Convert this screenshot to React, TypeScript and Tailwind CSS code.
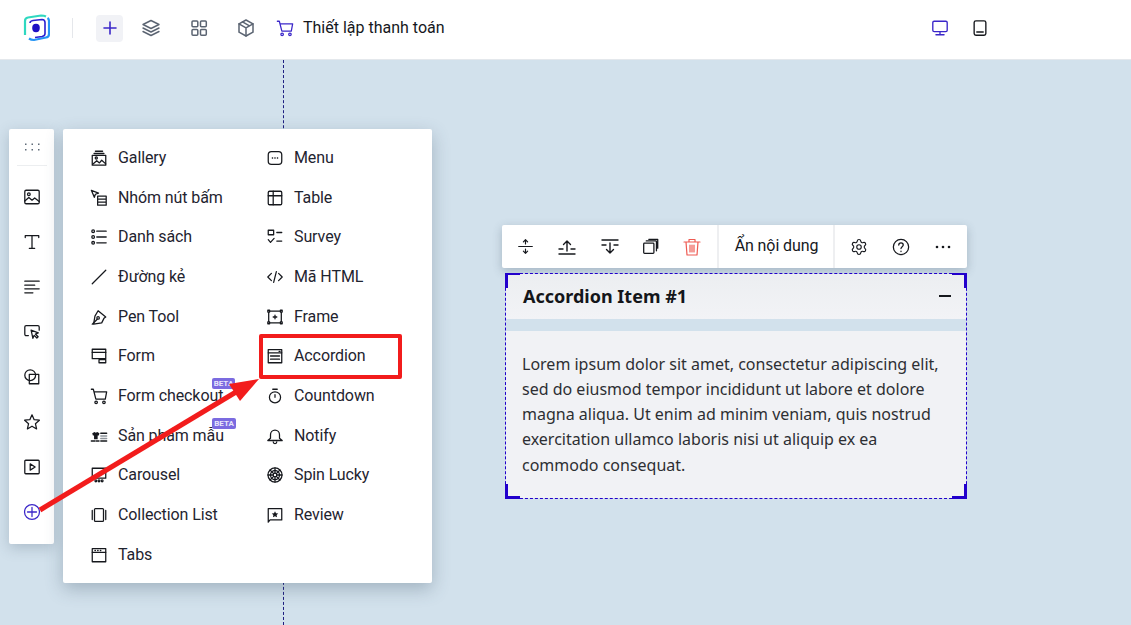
import React from "react";
import { Settings } from "lucide-react";

type P = { d: React.ReactNode; s?: number; c?: string; w?: number; v?: number };
const I = ({ d, s = 20, c = "#16181d", w = 1.4, v = 20 }: P) => (
  <svg width={s} height={s} viewBox={`0 0 ${v} ${v}`} fill="none" stroke={c} strokeWidth={w} strokeLinecap="round" strokeLinejoin="round" className="shrink-0">
    {d}
  </svg>
);

const icons: Record<string, React.ReactNode> = {
  gallery: <><path d="M6 2.5h8M4.5 5h11" /><rect x="2.5" y="7" width="15" height="11" /><circle cx="7" cy="10" r="1.2" /><path d="M3 17l4.5-4 3 2.5 2.5-3 4.5 4" /></>,
  group: <><path d="M1.5 1.5l8 3-3.5 1.3-1.2 3.5z" /><path d="M8.5 8H18v10H8.5zM8.5 11.3H18M8.5 14.7H18" /></>,
  list: <><circle cx="3.5" cy="3.5" r="1.5" /><circle cx="3.5" cy="10" r="1.5" /><circle cx="3.5" cy="16.5" r="1.5" /><path d="M7.5 3.5H18M7.5 10H18M7.5 16.5H18" /></>,
  line: <path d="M2.5 17.5L17.5 2.5" />,
  pen: <><path d="M9 3l8.5 7-2 1.5-2.5 5-9 1.5 1.5-9z" /><path d="M2.5 18l5.5-5.5" /><circle cx="9" cy="11" r="1.4" /></>,
  form: <><rect x="2.5" y="2.5" width="15" height="10.5" /><path d="M2.5 6h15" /><rect x="10" y="14" width="7.5" height="3.5" /></>,
  cart: <><path d="M1.5 2.5h2.2l2.8 11H17L18.5 5.5h-14" /><circle cx="6.8" cy="17" r="1.4" /><circle cx="15.5" cy="17" r="1.4" /></>,
  product: <><path d="M2.5 7L5 5.500l1.500 1 1.500-1L10.500 7l-.7 2.500H8.500v4h-4v-4H3.200z" fill="#16181d" stroke="none" /><path d="M1.500 15.500h4M7 15.500h3M12 15.500h6.500M12 7h6.500" strokeWidth="1.600" /><path d="M12 10h6.500M12 12.700h6.500" stroke="#8f959c" strokeWidth="1.600" /></>,
  carousel: <><rect x="2.500" y="2.500" width="15" height="11" /><circle cx="6.500" cy="16.500" r="1" /><circle cx="10" cy="16.500" r="1" /><circle cx="13.500" cy="16.500" r="1" /></>,
  collection: <><rect x="5" y="3" width="10" height="14" rx="1" /><path d="M2.500 5v10M17.500 5v10" /></>,
  tabs: <><rect x="2.500" y="3" width="15" height="14.500" /><path d="M2.500 7h15" /><path d="M5.500 5H6M8.500 5H9M11.500 5H12" /></>,
  menu: <><rect x="2.500" y="3" width="15" height="14" rx="3.500" /><path d="M7 10h.4M9.800 10h.4M12.600 10h.4" /></>,
  table: <><rect x="2.500" y="2.500" width="15" height="15" rx="1.500" /><path d="M2.500 7.500h15M8 2.500v15" /></>,
  survey: <><rect x="2.500" y="2.500" width="6" height="5" /><path d="M12 5h5.500M12 14.500h5.500M2.500 13L5 16l4-4.500" /></>,
  html: <path d="M6 6l-4 4 4 4M14 6l4 4-4 4M11.500 4l-3 12" />,
  frame: <><rect x="3" y="3.500" width="14" height="13" /><rect x="2" y="2.500" width="2" height="2" fill="#fff" /><rect x="16" y="2.500" width="2" height="2" fill="#fff" /><rect x="2" y="15.500" width="2" height="2" fill="#fff" /><rect x="16" y="15.500" width="2" height="2" fill="#fff" /><path d="M10 8v4M8 10h4" /></>,
  accordion: <><rect x="2.500" y="3" width="15" height="14.500" /><path d="M2.500 6.500h15M5 10h10M5 13.500h10" /><path d="M14.500 4.800h1.200" /></>,
  countdown: <><circle cx="10" cy="11.500" r="6.200" /><path d="M7.500 2.500h5M10 8.500v3" /></>,
  notify: <><path d="M5 12.500v-4a5 5 0 0110 0v4l3 2.500H2z" /><path d="M8 16.500a2 2 0 004 0" /></>,
  spin: <><circle cx="10" cy="10" r="7.800" /><circle cx="10" cy="10" r="5" /><circle cx="10" cy="10" r="2" /><path d="M10 2.200V8M10 12v5.800M2.200 10H8M12 10h5.800M4.500 4.500l4 4M11.500 11.500l4 4M15.500 4.500l-4 4M8.500 11.500l-4 4" /></>,
  review: <><path d="M2.500 18V3h15v12.500h-13z" /><path d="M10 5.800l1.100 2.300 2.500.3-1.800 1.700.5 2.500-2.300-1.300-2.300 1.300.5-2.500-1.800-1.700 2.500-.3z" fill="#16181d" stroke="none" /></>,
  image: <><rect x="2" y="2.500" width="16" height="15" rx="1.500" /><circle cx="6.500" cy="7" r="1.500" /><path d="M2 14.500l4.500-4 3.500 3 3-2.500 5 4" /></>,
  text: <path d="M2.500 5V3h15v2M10 3v14M7 17h6" />,
  align: <path d="M2 3.500h16M2 8h11M2 12h16M2 16.500h9" />,
  cursor: <><path d="M6 14H3.500A1.500 1.500 0 012 12.500v-8A1.500 1.500 0 013.500 3h13A1.500 1.500 0 0118 4.500V8" /><path d="M9 8l8 3-3.200 1.300 3 3-1.400 1.400-3-3L11 17z" /></>,
  shape: <><circle cx="8" cy="8" r="6" /><rect x="7" y="7" width="10.500" height="10.500" /></>,
  star: <path d="M10 2l2.400 5.400 5.800.6-4.400 3.900 1.300 5.800-5.100-3-5.100 3 1.300-5.800L1.800 8l5.800-.6z" />,
  video: <><rect x="2" y="2.500" width="16" height="15" rx="1" /><path d="M8 6.500l5.500 3.500L8 13.500z" /></>,
};

const col1: [string, string, boolean?][] = [
  ["gallery", "Gallery"],
  ["group", "Nhóm nút bấm"],
  ["list", "Danh sách"],
  ["line", "Đường kẻ"],
  ["pen", "Pen Tool"],
  ["form", "Form"],
  ["cart", "Form checkout", true],
  ["product", "Sản phẩm mẫu", true],
  ["carousel", "Carousel"],
  ["collection", "Collection List"],
  ["tabs", "Tabs"],
];
const col2: [string, string][] = [
  ["menu", "Menu"],
  ["table", "Table"],
  ["survey", "Survey"],
  ["html", "Mã HTML"],
  ["frame", "Frame"],
  ["accordion", "Accordion"],
  ["countdown", "Countdown"],
  ["notify", "Notify"],
  ["spin", "Spin Lucky"],
  ["review", "Review"],
];

const Row = ({ k, t, beta }: { k: string; t: string; beta?: boolean }) => (
  <div className="flex h-[39.7px] items-center gap-[10px]">
    <I d={icons[k]} s={18} />
    <span className="relative whitespace-nowrap text-[16px] leading-5 tracking-[-0.1px] text-[#1f2430]">
      {t}
      {beta && (
        <span className="absolute -top-[8px] right-[-12px] rounded-[2px] bg-[#7b6be0] px-[2px] text-[8px] font-bold leading-[11px] tracking-normal text-[#e8e6fb]">
          BETA
        </span>
      )}
    </span>
  </div>
);

const Corner = ({ cls }: { cls: string }) => <span className={`absolute h-[15px] w-[15px] border-[#2200cc] ${cls}`} />;

export default function App() {
  return (
    <div className="relative flex h-[625px] w-[1131px] flex-col overflow-hidden bg-[#d2e1ec] font-['Roboto',sans-serif]">
      {/* Guide line */}
      <div className="pointer-events-none absolute bottom-0 left-[283px] top-[60px] w-0 border-l border-dashed border-[#1e1e80]" />

      {/* Header */}
      <header className="relative flex h-[60px] shrink-0 items-center border-b border-[#e4e8ec] bg-white pb-[3px] pl-[23px]">
        <svg width="27" height="28" viewBox="0 0 27 28" fill="none" className="shrink-0">
          <path d="M2 21V7q0-3 3-3.500l13-2q3 0 5 1" stroke="#2fd8c0" strokeWidth="2.200" />
          <path d="M24.500 4q1.500 1 1.500 3v13q0 3-3 3.500l-12 2.500q-3 0-5-1.500" stroke="#2494f5" strokeWidth="2.200" />
          <path d="M7 9q0-2 3-2.500l9-1q3 0 3 3v11q0 2.500-3 3l-7 1" stroke="#2a1fd0" strokeWidth="1.600" />
          <ellipse cx="13" cy="14" rx="3.800" ry="4.200" fill="#1d0fc4" />
        </svg>
        <div className="ml-[22px] h-[20px] w-px bg-[#e5e7eb]" />
        <div className="ml-[23px] flex h-[27px] w-[27px] items-center justify-center rounded-[4px] bg-[#f1f2f6]">
          <I s={14} v={14} c="#3b27c9" w={1.6} d={<path d="M7 1v12M1 7h12" />} />
        </div>
        <div className="ml-[18px]">
          <I c="#5b6472" d={<><path d="M10 2.500l8 4-8 4-8-4z" /><path d="M2 10l8 4 8-4M2 13.500l8 4 8-4" /></>} />
        </div>
        <div className="ml-[28px]">
          <I c="#5b6472" w={1.5} d={<><rect x="3" y="3" width="5.800" height="5.800" rx="1" /><rect x="11.500" y="3" width="5.800" height="5.800" rx="1" /><rect x="3" y="11.500" width="5.800" height="5.800" rx="1" /><rect x="11.500" y="11.500" width="5.800" height="5.800" rx="1" /></>} />
        </div>
        <div className="ml-[27px]">
          <I c="#5b6472" w={1.5} d={<><path d="M10 2l7 3.800v8.400L10 18l-7-3.800V5.800z" /><path d="M3 5.800l7 4 7-4M10 9.800V18M6.500 3.900l7 4" /></>} />
        </div>
        <div className="ml-[20px]">
          <I s={18} c="#3b27c9" d={icons.cart} />
        </div>
        <span className="ml-[9px] text-[16px] leading-5 text-[#16181d]">Thiết lập thanh toán</span>
        <div className="ml-[486px]">
          <I s={18} c="#3b27c9" w={1.5} d={<><rect x="2" y="2.500" width="16" height="11.500" rx="1.500" /><path d="M10 14v3.500M5.500 17.500h9" /></>} />
        </div>
        <div className="ml-[22px]">
          <I s={18} w={1.5} d={<><rect x="3.500" y="2" width="13" height="16" rx="2" /><path d="M6.500 14.500h7" strokeWidth="1.800" /></>} />
        </div>
      </header>

      {/* Canvas */}
      <main className="relative flex flex-1 items-start pl-[9px] pt-[69px]">
        <aside className="flex h-[415px] w-[45px] shrink-0 flex-col items-center rounded-[2px] bg-white shadow-[0_4px_14px_rgba(60,80,100,0.25)]">
          <div className="flex h-[37px] w-[30px] items-center justify-center border-b border-[#eceef0]">
            <svg width="16" height="8" viewBox="0 0 16 8" fill="#5f6b78">
              {[1, 7.5, 14].map((x) => (
                <React.Fragment key={x}>
                  <rect x={x} y="0.500" width="1.500" height="1.500" />
                  <rect x={x} y="6" width="1.500" height="1.500" />
                </React.Fragment>
              ))}
            </svg>
          </div>
          <div className="mt-[22px] flex flex-col items-center gap-[27px]">
            {["image", "text", "align", "cursor", "shape", "star", "video"].map((k) => (
              <I key={k} d={icons[k]} s={18} />
            ))}
            <I s={18} c="#3b27c9" d={<><circle cx="10" cy="10" r="8.300" /><path d="M10 5v10M5 10h10" /></>} />
          </div>
        </aside>

        <section className="ml-[9px] flex h-[454px] w-[369px] shrink-0 rounded-[2px] bg-white pl-[27px] pt-[9px] shadow-[0_6px_18px_rgba(60,80,100,0.32)]">
          <div className="w-[176px] shrink-0">
            {col1.map(([k, t, b]) => (
              <Row key={t} k={k} t={t} beta={b} />
            ))}
          </div>
          <div>
            {col2.map(([k, t]) => (
              <Row key={t} k={k} t={t} />
            ))}
          </div>
        </section>

        <section className="ml-[70px] mt-[96px] w-[465px] shrink-0">
          <div className="flex h-[43px] items-center rounded-[2px] bg-white shadow-[0_3px_10px_rgba(60,80,100,0.3)]">
            <div className="flex h-full w-[217px] items-center justify-between border-r-2 border-[#eeeff1] pl-[15px] pr-[15px]">
              <I s={17} d={<path d="M2 10h16M10 2v5M7.500 4.500L10 2l2.500 2.500M10 18v-5M7.500 15.500L10 18l2.500-2.500" />} />
              <I s={20} d={<path d="M2 17h16M2 12h4M14 12h4M10 14V4M6.500 7.500L10 4l3.500 3.500" />} />
              <I s={20} d={<path d="M2 3h16M2 8h4M14 8h4M10 6v10M6.500 12.500L10 16l3.500-3.500" />} />
              <I s={17} w={1.500} d={<><rect x="2" y="6" width="12" height="12" rx="1" /><path d="M5 3.500h11a1 1 0 011 1V15M8 1.500h10.500V12" /></>} />
              <I s={20} w={1.2} c="#ee5a52" d={<path d="M2 5h16M7 5V2.500h6V5M4 5l1 13h10l1-13M8 8v7M10 8v7M12 8v7" />} />
            </div>
            <div className="flex h-full w-[116px] items-center justify-center border-r-2 border-[#eeeff1] pb-[2px] pl-[1px] text-[16px] tracking-[-0.1px] text-[#16181d]">Ẩn nội dung</div>
            <div className="flex flex-1 items-center pl-[15px]">
              <Settings size={18} strokeWidth={1.5} color="#16181d" />
              <div className="ml-[24px]">
                <I s={18} d={<><circle cx="10" cy="10" r="8.500" /><path d="M7.500 7.800a2.500 2.500 0 115 0c0 1.800-2.500 1.900-2.500 3.900M10 14.700v.3" /></>} />
              </div>
              <svg className="ml-[25px]" width="16" height="4" viewBox="0 0 16 4" fill="#16181d"><circle cx="2" cy="2" r="1.300" /><circle cx="8" cy="2" r="1.300" /><circle cx="14" cy="2" r="1.300" /></svg>
            </div>
          </div>

          <div className="relative ml-[3px] mt-[5px] h-[226px] w-[462px] border border-dashed border-[#2200cc] font-['Noto_Sans',sans-serif]">
            <Corner cls="left-[-1px] top-[-1px] border-l-[3px] border-t-[2px]" />
            <Corner cls="right-[-1px] top-[-1px] border-r-[3px] border-t-[2px]" />
            <Corner cls="left-[-1px] bottom-[-1px] border-l-[3px] border-b-[3px]" />
            <Corner cls="right-[-1px] bottom-[-1px] border-r-[3px] border-b-[3px]" />
            <div className="flex h-[45px] items-center justify-between bg-gradient-to-b from-[#eceef1] to-[#f2f3f6] pb-[2px] pl-[17px] pr-[15px]">
              <span className="text-[18px] font-bold leading-6 text-[#14161a]">Accordion Item #1</span>
              <span className="h-[2px] w-[12px] bg-[#16181d]" />
            </div>
            <div className="mt-[12px] h-[167px] bg-[#f1f2f5] px-[16px] pt-[20.500px] text-[16px] leading-[25.250px] text-[#2d2f33]">
              Lorem ipsum dolor sit amet, consectetur adipiscing elit, sed do eiusmod tempor incididunt ut labore et dolore magna aliqua. Ut enim ad minim veniam, quis nostrud exercitation ullamco laboris nisi ut aliquip ex ea commodo consequat.
            </div>
          </div>
        </section>
      </main>

      {/* Annotation */}
      <div className="absolute left-[259px] top-[334px] h-[45px] w-[143px] rounded-[2px] border-[4px] border-[#f21c1c]" />
      <svg className="pointer-events-none absolute left-0 top-0" width="1131" height="625" viewBox="0 0 1131 625">
        <path d="M40 510L236 392" stroke="#f21c1c" strokeWidth="5" />
        <path d="M259 379L229 384L240 401z" fill="#f21c1c" />
      </svg>
    </div>
  );
}
